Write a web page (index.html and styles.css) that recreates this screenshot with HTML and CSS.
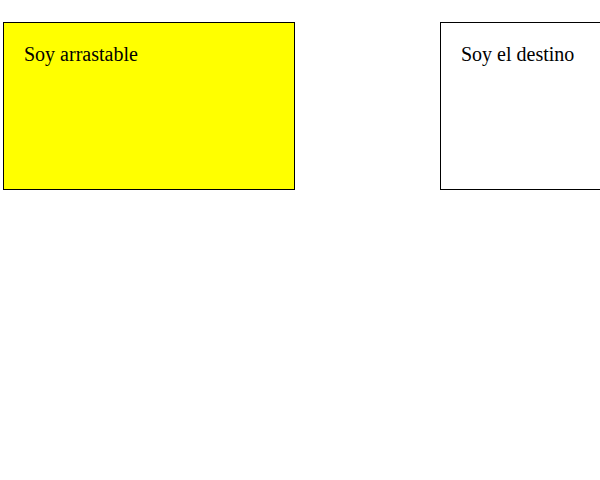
FILE: index.html
```html
<!DOCTYPE html>
<html lang="es">
<head>
<meta charset="utf-8">
<link rel="stylesheet" href="styles.css">
</head>
<body>
<div class="stage">
  <div class="box draggable">Soy arrastable</div>
  <div class="box target">Soy el destino</div>
</div>
</body>
</html>
```
FILE: styles.css
```css
html, body {
  margin: 0;
  padding: 0;
  background: #fff;
}
body {
  font-family: "Liberation Serif", "Times New Roman", serif;
  font-size: 20px;
  color: #000;
  overflow: hidden;
}
.stage {
  display: flex;
  gap: 145px;
  padding: 22px 0 0 3px;
}
.box {
  flex: none;
  width: 250px;
  height: 126px;
  padding: 20px;
  border: 1px solid #000;
}
.draggable {
  background: #ffff00;
}
.target {
  background: #fff;
}
```
